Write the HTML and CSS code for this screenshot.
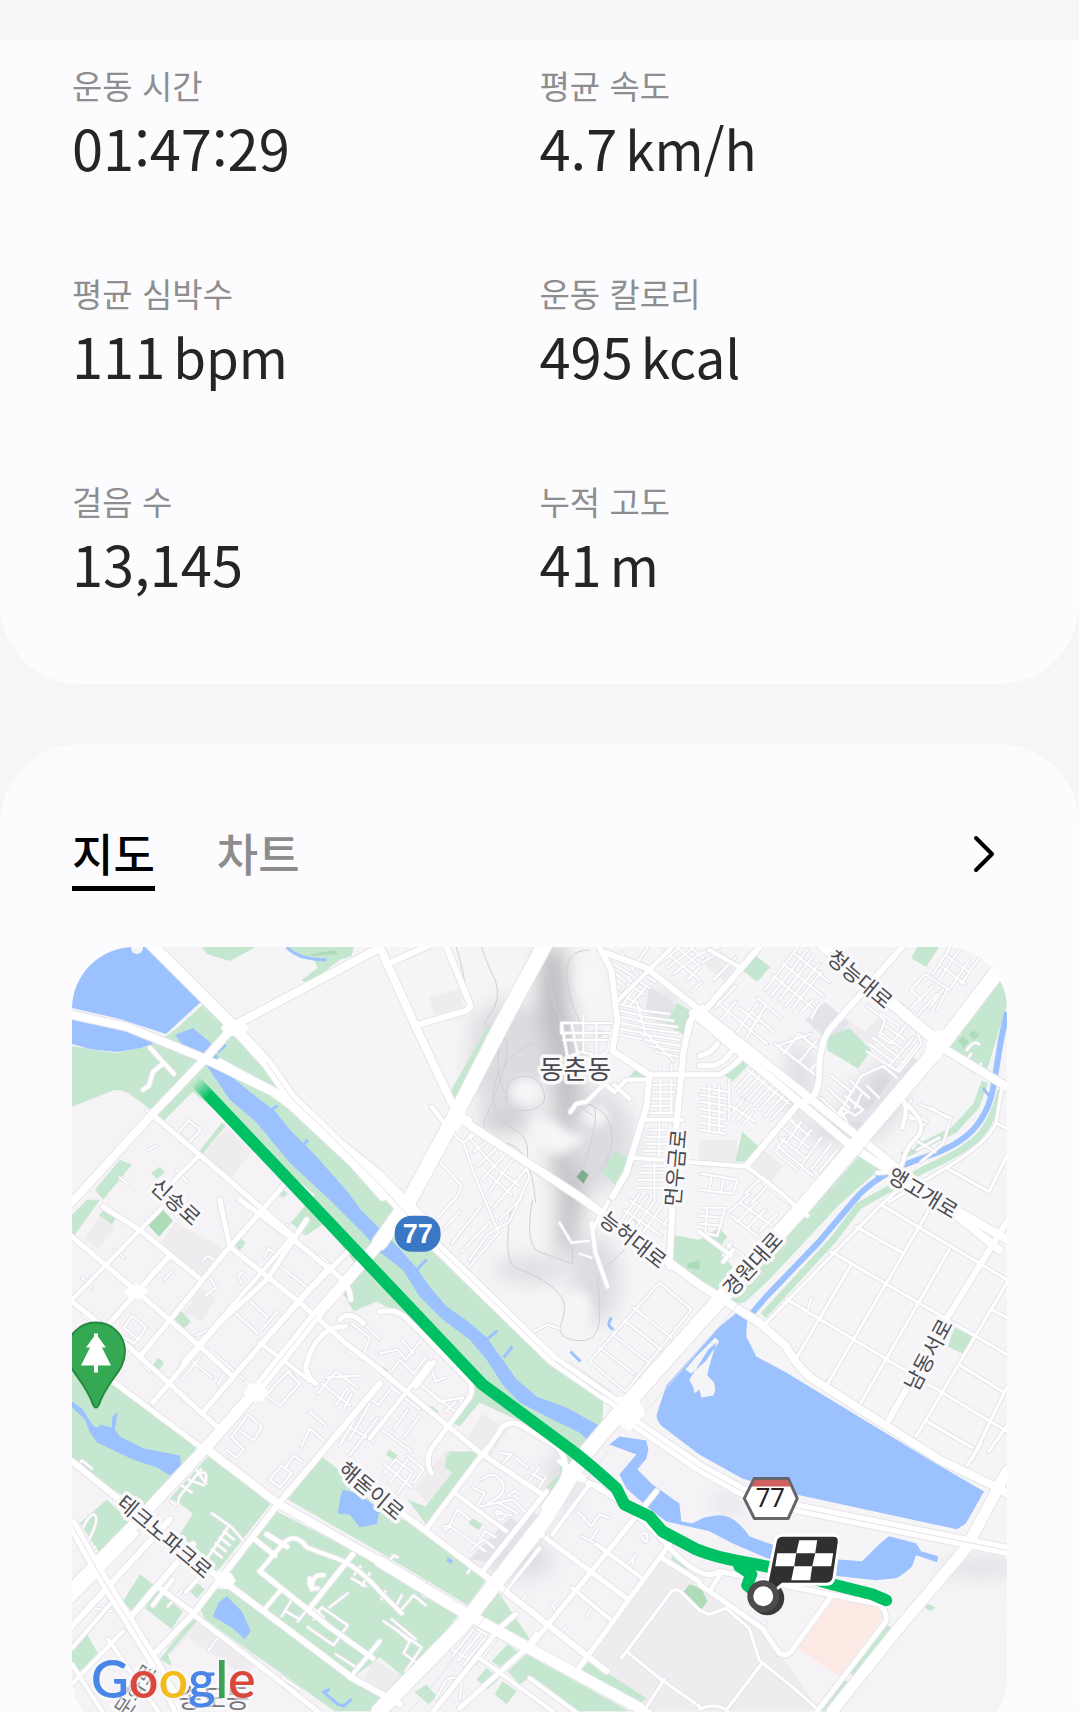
FILE: index.html
```html
<!DOCTYPE html>
<html lang="ko">
  <head>
    <meta charset="UTF-8" />
    <meta name="viewport" content="width=device-width, initial-scale=1.0" />
    <title>운동 기록</title>
    <link rel="stylesheet" href="styles.css">
  </head>
  <body>
    <main class="screen">
      <section class="card summary">
        <dl class="stats">
          <div class="stat"><dt>운동 시간</dt><dd>01:47:29</dd></div>
          <div class="stat"><dt>평균 속도</dt><dd>4.7<span class="unit">km/h</span></dd></div>
          <div class="stat"><dt>평균 심박수</dt><dd>111<span class="unit">bpm</span></dd></div>
          <div class="stat"><dt>운동 칼로리</dt><dd>495<span class="unit">kcal</span></dd></div>
          <div class="stat"><dt>걸음 수</dt><dd>13,145</dd></div>
          <div class="stat"><dt>누적 고도</dt><dd>41<span class="unit">m</span></dd></div>
        </dl>
      </section>

      <section class="card route">
        <div class="route-head">
          <div class="tabs">
            <button type="button" class="tab active">지도</button>
            <button type="button" class="tab">차트</button>
          </div>
          <button type="button" class="more" aria-label="지도 자세히 보기">
            <svg viewBox="0 0 40 40"><path d="M11 4l16 16-16 16"/></svg>
          </button>
        </div>

        <div class="map">
          <svg viewBox="72 947 936 793" role="img" aria-label="운동 경로 지도">
            <defs>
              <filter id="soft" x="-50%" y="-50%" width="200%" height="200%"><feGaussianBlur stdDeviation="10"/></filter>
              <filter id="softer" x="-50%" y="-50%" width="200%" height="200%"><feGaussianBlur stdDeviation="5"/></filter>
              <linearGradient id="fade" gradientUnits="userSpaceOnUse" x1="195" y1="1081" x2="209" y2="1096">
                <stop offset="0" stop-color="#00c064" stop-opacity="0"/>
                <stop offset="1" stop-color="#00c064"/>
              </linearGradient>

              <g id="alleys">
                <!-- fan of blocks under the hill -->
                <path d="M452 1133l12 10 10 30 25 60-30 35M464 1143l12-14 48 30 6 18-20 45-22 13-18 25M474 1152l18-14M478 1166l22-20M482 1180l26-28M488 1194l28-38M494 1208l34-40M500 1220l22-22M484 1130l-14 8 26 30 26 20M490 1175l22 20"/>
                <path d="M438 1160l24 26-4 10-20 22M452 1244l30-38M462 1252l28-30M438 1236l22-24"/>
                <!-- blocks right of the hill -->
                <path d="M562 1023h52v10h-52zM562 1023l6 34 14-5 18 4 8-4 6-28M564 1040h44M572 1023l6 30M584 1016v36M597 1023v33M602 1056l-4 12M586 1057l8 8"/>
                <path d="M619 1004l22 5M618 1010l22 5M617 1016l24 5M617 1022l24 5M617 1028l26 5M616 1034l26 5M618 993l20 10 8 30 14 14 14 14"/>
                <path d="M640 1010l30 4M640 1016l34 5M640 1022l38 5M641 1028l38 5M642 1034l38 6M646 1040l36 6M650 1046l32 6M656 1052l24 5"/>
                <path d="M619 1000l10-14M624 1004l14-20M630 1006l16-18M628 984l16 10M634 978l16 10M640 972l16 10M610 962l24 14M612 970l14 12M608 976l12 12M622 952l12 18M648 948l-14 20"/>
                <path d="M650 1085h26M649 1092h26M648 1099h26M646 1106h26M645 1113h28M661 1068v46M672 1065v50M650 1130h24M648 1137h24M646 1144h24M644 1151h24M660 1122v36M671 1125v32M642 1166h28M640 1173h30M638 1180h30M636 1188h28M655 1160v38"/>
                <path d="M662 962l20-16M668 968l26-20M674 974l26-20M664 950l36 30M676 946l24 20M690 946l14 12M688 980l12-12M692 992l10-10"/>
                <path d="M702 1088l26 4M701 1095l26 4M701 1102l26 4M700 1109l26 4M700 1116l26 4M700 1123l26 4M700 1130l26 4M710 1085v46M720 1086v46M730 1080v40"/>
                <path d="M736 1090l22-24M742 1096l22-24M748 1100l22-24M754 1106l20-22M760 1110l20-22M766 1116l18-20M772 1120l18-20M748 1070l42 34M732 1114l12-14M738 1120l14-16M744 1124l10-12M732 1106l24 16"/>
                <!-- 청능대로 both sides -->
                <path d="M700 954l22-8M704 962l16-10M714 980l22-22M716 1008l20-22M715 1000l36 30 10-14M722 1020l14-18M736 1034l22-30M746 1040l20-34M758 998l24 20M752 1012l22 20M746 1026l22 18M740 1008l18 14"/>
                <path d="M766 990l32-42M772 996l36-46M780 1000l34-44M786 1006l34-42M792 1010l30-38M774 976l40 32M784 964l40 32M796 954l34 28M802 1012l12-12M812 1018l8-14"/>
                <path d="M778 1046l34-12M784 1054l16-20 22 18M776 1044l44 34M800 1062l18-22M812 1070l10-14"/>
                <path d="M868 1006l18 14-6 16 12 8 22-28-12-12M882 1014l18 12M870 1044l24 18M874 1038l26 20M880 1032l22 16M886 1026l20 14M890 1066l24-28M898 1070l20-26M868 1052l32 20 22-28-6-20"/>
                <path d="M918 1016l20-22M912 1008l22-22M922 1000l-10-10 14-16 24 16M930 1008l14-18M938 1010l10-20M940 980l20-30M934 974l18-28M950 990l20-30M962 984l18-26M942 966l24 18M948 956l22 16"/>
                <path d="M846 1104l16-28 22-10 14 12M850 1080l20 18M832 1076l20 16-12 24M828 1088l22 20M822 1098l18 18M818 1106l16 16 8-14M846 1096l18 14-8 6-12-8M862 1094l-6 14M868 1086l12 12M834 1122l14-10M842 1112l8 14"/>
                <!-- below 청능대로 -->
                <path d="M790 1120l20 16M784 1128l26 20M780 1138l26 20M790 1116l8 12M802 1122l-14 20M812 1130l-14 20M822 1138l-20 28M832 1144l-20 26M838 1150l-18 22M778 1146l36 30M786 1138l-10 14 22 18"/>
                <path d="M746 1194l14-14 30 24M752 1204l14-16M702 1174l36 6-4 14-34-4M712 1176l-2 16M724 1178l-2 14M730 1212l20-18M738 1222l20-20M748 1228l18-18M760 1232l18-18M732 1216l28 22M742 1204l34 24"/>
                <path d="M702 1208h24l-8 28-18-4M708 1210l-2 22M700 1216l24 2M700 1224l22 2M728 1244l18 14M724 1256l8-14"/>
                <path d="M672 1212l-8 14M664 1204l-24 34M656 1200l-24 34M648 1196l-24 34M640 1194l-20 30M630 1200l40 28M624 1210l38 26"/>
                <path d="M906 1106l22 16M908 1114l16 10M912 1100l-8 18 18 2M920 1104l32 14-8 26-22 18M932 1108l16 10M918 1150l22-12M916 1140l20 12M926 1124l-12 24"/>
                <!-- warehouse plots -->
                <path d="M660 1283l32 27-66 82-36-30zM634 1308l38 30M624 1320l38 30M612 1334l36 28M600 1348l34 26"/>
                <path d="M532 1333l16-8 12 4M560 1223l12 20 18-2M580 1254l12 4"/>
                <!-- 신송로 side -->
                <path d="M178 1133l11-12 12 9-12 13zM177 1170l10 12M120 1178l8 6M148 1150l8-4M146 1110l8 7M82 1278l10 10M114 1250l10 8M82 1315l8 6M164 1280l8-8M202 1262l6-6 6 4M185 1302l-6-4M206 1296l10-8-6-10M196 1336l12-6M242 1284l-4-8 6-4M265 1257l4-8 8 6M288 1225l-10 8M272 1260l38 30M318 1210l4 12M328 1263l-8-8"/>
                <path d="M124 1328l8-12 14 12-8 12zM142 1334l-8 10-12-8M218 1385l6-10M182 1402l6-8M150 1372l-6-6M248 1358l6-8M282 1322l6-6"/>
                <path d="M234 1312l24 22M246 1298l22 20M260 1332l18-20M268 1338l20-20M200 1358l-18 22M210 1350l34 30M188 1358l24 20"/>
                <path d="M232 1437l16-22 14 12-8 14-14-10M232 1438l12 12-8 8-10-8M266 1396l22-24 12 12-20 22zM286 1374l6-4 6 6M302 1447l8-18 14 12M310 1412l16 14M322 1384l28 22M318 1394l18-22 22 16M336 1406l12-18M344 1410l8-16M326 1378l34-2M340 1446l28-48 12 8M350 1440l20-36M344 1424l30 18M350 1456l28-38"/>
                <path d="M352 1324l18 14-8 22-14-8M366 1326l14 14M380 1354l18-4 8 10 16-20M392 1372l8-12 14 14 12-16M402 1340l12 14M380 1404l12-16 28 22M386 1420l14-18M394 1430l14-20M404 1438l16-22M382 1430l30 22M424 1376l8-6 4 12 10-4M430 1392l28 22 4-14M420 1384l20 18 24-4M446 1412l10-10"/>
                <!-- 해돋이로 side -->
                <path d="M384 1474l12-14 16 12M390 1484l18-24M398 1494l14-20M384 1464l28 24M408 1456l16 14-10 14M498 1453l14 2-10 10-14-4M516 1458l12 10M540 1468l-12 16 10 6 8-12M532 1474l10 6"/>
                <path d="M473 1488l12 6-8 14 36-8 14 14M482 1480q12-10 20 2t-14 22M498 1514l14 2M500 1504l18 10M448 1530l10-20 12 10M446 1532q-4-8 6-4l34 24M470 1552l14-12 10 8M480 1540l6-8 10 6M508 1497l8-6 6 6M502 1513q-8-4-4 4t8-2"/>
                <path d="M452 1658l22-28M458 1662l24-30M464 1666l22-28M472 1664l16-22M452 1650l24 14M478 1630l18 10-16 22M436 1700l10-18q8-8 16 2l-2 16"/>
                <path d="M386 1592l-4 8M402 1596l-6 12M396 1630l14 12-6 12 14 10M384 1622l38 26-16 24M392 1620l24 20M402 1610l12-14 12 10M430 1584l-6 12 14 6M388 1564l6-8 4 2M468 1574l6-10"/>
                <!-- park paths -->
                <path d="M171 1502q8 8 8-4l22-28M188 1480l16 6M196 1470l10 14M198 1475q10-6 8 6M180 1485l12 8M76 1467l6-6 10 8M212 1514l20 14 12 14M228 1528l-20 30M216 1544l10 8M212 1550l10 8M220 1538l10 8M224 1532l10 8M236 1466l8 14M220 1460q4 8 8 0M270 1480l12-14 10 8-12 14zM286 1468l8-12 8 6"/>
                <path d="M83 1528q8-16 12-12t-4 20 4 12M112 1612l-24-4 6-6M168 1607l14-16M208 1652l12-16M352 1579l14 8M355 1575l6-8M362 1586l8-12M282 1617l12-20M286 1612l14 8M298 1622l8-10 12 8M314 1620l8-12 26 18-14 20-26-18M330 1608l18-14M320 1618l10 8M310 1606l14 12M336 1655l22 14 4-6M282 1678l18 12"/>
                <!-- campus side -->
                <path d="M584 1519l8 8 8-12 10 4M578 1513l8 6M582 1537l12 6 8 8M592 1540l6-10M618 1493l-4 4M642 1535q6-4 6 4t-6-2M636 1556l-10 12q8 2 8-8M520 1606l6-10M556 1612l-4-8M588 1616l6-10M560 1636l6-8M762 1628l4-6"/>
                <path d="M808 1312l4-14M968 1050q6-10 12-6M962 1056l12 10M966 1064l6-10M974 1072l8-8"/>
              </g>

              <g id="roads">
                <g class="w3">
                  <path d="M930 1210L828 1385M950 1250L862 1403M1008 1283L917 1437M1008 1387L973 1460M852 1265l-54 92M882 1205l126 75M857 1227l46 26M832 1252l176 103M788 1300l220 132M993 1310l15 8M960 1365l45 28M928 1422l45 26M767 1323l113-116q14-14 30-24"/>
                  <path d="M1003 1088l-6 35q-8 20-50 45t-57 34M997 1123l11 6M947 1168l43 24 18-36"/>
                  <path d="M622 1659l48-64q6-8 12-2l18 18 10 4 17-6 23 20 10 32 37 30 20 18M627 1652l33 27 40 28M762 1665l-35 46M665 1680l-18 28"/>
                  <path d="M700 1710q20-8 30 4M990 1452l18-26M968 1466l14-22"/>
                </g>
                <g class="w5">
                  <path d="M673 947l-58 57M710 950l30 17M592 1223l4 30 12 34M593 1230l16-28M571 1112l6-8 10-2 18-18 10 8 12-12h18M615 1085l15 14"/>
                  <path d="M700 1163l48 4 35 27 17 16M633 1158l67 5M645 1120h38M800 1210l8 6M700 1232l32 24M724 1262l10-12"/>
                  <path d="M903 1128q8-24-2-30M908 1105q22 20 10 32t-14 24-26 12"/>
                  <path d="M452 1133l-20-26M150 1048l24 26M163 1064l-10 8-4 14-6 4"/>
                  <path d="M198 1157l-24 24M163 1207l-91 93M170 1257l-62 68M183 1363l107-123M430 1363l-60 76M260 1343l50 38M260 1572l20-24q14-18 27 0 10 4 30 11t43 33l22 22"/>
                  <path d="M263 1612l17-20M457 1495l50 37M573 1589l40 33M597 1545l46 34M507 1590l33-41M553 1535l34-46q6-8 14-2M480 1659l73 53M530 1679l60 44M310 1579q-2 12 8 10M312 1590q0-16 12-14M350 1679l30-37"/>
                  <path d="M72 1649l38-44M72 1685l51-53M108 1640l50 72M130 1630l60 82M72 1665l30 47M723 1572l-13 20M173 1580l-20 26M200 1577l-14 16"/>
                </g>
                <g class="w6">
                  <path d="M103 1207l39 25 60 49M72 1237l65 55 70 61 26 24M72 1302l60 48 88 80M93 1367l107 80M155 1117l82 70 57 50M240 1200l50 37 53 43q8 10 8 20M220 1200l10 47 70 56 50 44 30 23 100 83M153 1403l67-80 47-43 40-60M203 1413l94-110 33-36M140 1357l90-110 33-37 22-26M110 1323l60-68M233 1377l80-90 40-40"/>
                  <path d="M310 1381l-4-14q10-40 40-40M306 1370q4 10 10 14M340 1320q10-10 24 4M380 1312q18-4 30 10l60 60q4 8 0 16l-36 48q-10 14-2 28M434 1363l-18 24"/>
                  <path d="M500 1432q4-10 18-8l40 24q16 18 0 40l-14 20M483 1455l60 40M500 1432l-16 24"/>
                  <path d="M700 1585l63 44 17 25q8 4 12-2l40-55M560 1462l24 16M663 1559l37 23M580 1479l13 6q38 20 74 60t53 27l80 17 80 16q8 6 7 17l-69 90"/>
                  <path d="M427 1529l60-80M483 1572l64-80M537 1532l90 67M527 1652l130-160M577 1672l93-127M460 1709l67-60 10-14M430 1717l70-88 16-14"/>
                  <path d="M193 1615l87 67 50 40M310 1609l43-54M267 1535l20 12M260 1572l70 56 43 31M255 1540l20 16M160 1589l30 22M700 1075h20q14-8 23-18M650 1075h50M700 1066h12q12-2 20-14M700 1056q12-2 18-12"/>
                  <path d="M470 1120q-10-4-12-12"/>
                </g>
                <g class="w7">
                  <path d="M447 947l23 56q2 6-4 8l-48 14M390 963l40-18M600 947l12 24 6 50-5 30 37 24-3 32-20 66-14 24M690 1023l-6 30-7 74-7 140M703 1008q-12 6-14 24M760 947l-60 70M1008 1222l-61 98-57 100"/>
                  <path d="M903 947l-73 83q-10 14-10 43t-20 30l-52 62M607 953l40 15 53 42"/>
                  <path d="M497 1585l110 87M400 1512l97 73M72 1600l64-66M60 1640l110-120M133 1615l60-70M157 1652l36-37 28-36 57-74 45-53 57-68"/>
                  <path d="M72 1462l71 57 77 60 133 100 47 26"/>
                </g>
                <g class="w9">
                  <path d="M380 948l-145 77-28 32-57 60-73 80-20 20M380 947l33 73 39 83M700 1010l300 240M694 1013l159 134 47 30 108 63M462 1120l118 77 120 88 60 38 27 24q8 16 23 30l130 83 60 29 20 13"/>
                  <path d="M947 1050l61 37M72 1015l55 12 76 31 70 34 47 35 60 48 50 50M220 1063l60 32 73 68 30 34M210 1452l68 52 102 58 87 53 173 94 40 24"/>
                </g>
                <g class="w12">
                  <path d="M147 940l88 88 32 35 26 37 27 25 60 60 57 62 116 113 70 48M823 945l110 92M72 1525l28 50 60 97 18 40M630 1420l70 48 43 24 57 17 208 42"/>
                  <path d="M1008 1472l-41 77-70 83-64 80M380 1243l-63 72-60 75-50 57-67 72-68 70M380 1562l87 53 173 94"/>
                </g>
                <g class="w16">
                  <path d="M545 945l-42 78-48 94-45 83-30 43M1002 967l-55 72-47 55-50 59-40 47-110 123-73 82-42 50-40 66-82 105-84 86"/>
                </g>
              </g>
            </defs>

            <rect class="land" x="72" y="947" width="936" height="793"/>
            <path class="upper-land" d="M230 947H1008V1632H897L700 1470 600 1410 437 1247 293 1100Z"/>

            <g class="hill" filter="url(#soft)">
              <path class="dark" d="M540 947h24l6 60 8 50 6 60-6 40 6 40-12 60-14-6 2-60-8-50 4-60-18-60z"/>
              <ellipse class="dark" cx="506" cy="1121" rx="24" ry="10"/>
              <ellipse class="dark" cx="576" cy="1166" rx="24" ry="26"/>
              <ellipse class="mid" cx="502" cy="1022" rx="36" ry="8"/>
              <ellipse class="mid" cx="510" cy="1060" rx="40" ry="60"/>
              <ellipse class="mid" cx="600" cy="1140" rx="34" ry="50"/>
              <ellipse class="mid" cx="530" cy="1270" rx="36" ry="12"/>
              <ellipse class="mid" cx="596" cy="1280" rx="24" ry="44"/>
              <ellipse class="dark" cx="883" cy="1086" rx="14" ry="16"/>
              <ellipse class="mid" cx="875" cy="1104" rx="30" ry="22"/>
              <ellipse class="mid" cx="845" cy="1130" rx="40" ry="14"/>
              <ellipse class="mid" cx="562" cy="1480" rx="14" ry="28"/>
              <ellipse class="mid" cx="520" cy="1560" rx="34" ry="18"/>
              <ellipse class="mid" cx="728" cy="1504" rx="16" ry="7"/>
              <ellipse class="mid" cx="980" cy="1568" rx="40" ry="8"/>
              <ellipse class="mid" cx="666" cy="1000" rx="14" ry="10"/>
              <ellipse class="mid" cx="800" cy="1080" rx="12" ry="40"/>
            </g>
            <g class="glow" filter="url(#softer)">
              <ellipse cx="527" cy="1092" rx="16" ry="14"/>
              <path d="M530 1124q20-10 32 2t24 8q-6 16-26 20t-30-30z"/>
              <ellipse cx="596" cy="1116" rx="14" ry="10"/>
              <ellipse cx="592" cy="980" rx="14" ry="24"/>
              <ellipse cx="578" cy="1310" rx="14" ry="20"/>
            </g>
            <path class="contour" d="M482 947q4 14 14 34 6 20-6 34t8 12q14 14 8 36t-18 50 16 30 32 60M545 947q2 40 14 66 6 30 10 50M590 950q-26 0-22 30t12 40q6 30-4 46-4 40 18 50M548 1052q-8-16-24-4-30 20-30 46t18 34 16 26 16 24 30 0 20-46-14-20-20-22 4-40M520 1077q18-4 24 14t-20 20-14-30zM573 1102q30 0 38 24t-14 50M533 1200q-8 44 6 52l34 12q2-20-10-60M512 1205q-10 60 6 64 30 10 44 28 6 10 0 26t16 18 22-24-2-34 24-30 8-40M456 945q10 30 12 60M500 1040q-6 40 10 60"/>

            <g class="block">
              <path d="M228 1128l24 24-22 28-30-23zM175 1222l52 28-27 32-40-37zM100 1215l15 14-17 20-14-10zM200 1288l16 12-14 22-18-8zM663 1559l105 71 14 25 36 54-8 3H640l-50-60zM483 1414l26 16-20 30-22-20zM414 1490l32-40 18 18-34 38zM353 1615l27 20-17 17-23-18zM200 1618l60 40-14 20-58-40-18 18-4-8zM372 1660l30 16-20 30-20-18zM430 997l30-8 4 18-30 8zM700 1140h38v28h-38zM764 1150l20 16-14 18-20-16zM720 950l22 18-14 16-26-22zM846 1018l20 14 14-16 8 12-14 18-32-14z"/>
              <path class="cool" d="M650 986l28 20-12 22-20-16zM806 1020l20-18 24 20-18 22zM870 1110l40-56 10 8-48 62-36-4zM505 1545l28-34 12 10-36 44zM470 1560l26 4 24-40-10-6z"/>
            </g>

            <g class="green">
              <path d="M72 1046l45 7 40-11 18-12 30-27 22 22 8 10 33 30 22 32 90 95 40 44 120 111 64 48-1 33-16 22-34-10-20-13-23-10-30-14-20 24-8-4 18-30-3-14-68-65-22-12-23 10-15-26 15-24-29-39-19 13-15-13 24-28L193 1092 163 1122 155 1113 128 1093Q118 1088 110 1092L72 1107z"/>
              <path d="M202 947h54l-26 14-23-7zM287 947h67l-2 9-12 4-32 24-6-4 16-12-4-8-14-2zM95 1190l25-30 12 5-29 35zM72 1215l15-15h13l-25 35-3 3zM108 1207l9 10-5 8-13-10zM160 1167l5 6-8 6-6-6zM240 1238l6 5-6 8-5-6zM182 1312l9 10-7 7-12-12zM158 1358l6 5-4 7-8-2zM284 1190l4 4-5 4-4-4z"/>
              <path d="M222 1123l4 3-24 29-3-3z"/>
              <path d="M72 1367l41 13 84 65-7 17-43 48-17-10-58-34zM107 1500l33 32-37 27-23-35zM210 1455h10l52 48-52 66-8 5-32-39 13-21-16-12-7-3zM322 1457l-34 43 92 53 88 53 19-26-57-48-50-22-35-35zM448 1452h24l13 5-58 69-19-26 18 7 32-41zM277 1512l103 53 80 49-67 86-5-10 14-14-22-18-25 19-128-89-5-13zM200 1608l17-18h11l122 88 35 22v12h-50l-130-92zM140 1575l13 10-21 27-9-10zM157 1590l26 22-11 18-27-21zM198 1584l7 6-8 9-7-7zM87 1635l11 19-18 18-8-5v-17zM193 1618l4 4-29 33 4 12-12-7zM390 1450l8 6-4 5-8-6zM384 1367l5 4-4 4-5-4zM432 1406l7 6-4 4-6-5zM447 1454l16 10-6 12-12-8z"/>
              <path d="M498 1592l34 50-5 2-50-27zM590 1662l57 37-10 8-59-33zM527 1655l103 57h-50l-47-35-13 8-12-13zM508 1645l10 7-15 18-11-8zM487 1669l13 10-12 11-11-10zM427 1685l10 12-8 8-14-12zM503 1682l14 10-10 13-12-10zM562 1452l28 13-43 38-6-10 19-18zM473 1519l10 6-4 6-10-7zM673 1554l19 12-5 5-15-11z"/>
              <path d="M487 1028l7 5-39 65-6-3zM594 1030h8v7h-8zM678 1003l17 10-10 22-19-10zM638 1067l10 6v7h-20zM615 1152l14 5-2 16-9 14-15-14 4-8zM753 953l18 14-13 15-15-12zM918 947h22l-13 20-15-9zM828 1037l22-9 22 22-13 19-31-19zM743 1053l9 9-19 20-10-9zM743 1132l18 16-13 14h-12zM997 977l9 10 2 18-20 65-38-22-2-8zM860 1157l22 11-42 37-70 75-25 23-12 2-3-8 92-102zM673 1235l27 5 20-12 8 9-8 11 13 19-10 26-23-13-32-21zM955 1328l19 9-9 18-16-8zM887 1624l8 8-35 47-10-5zM843 1679l10 6-25 27h-10zM928 1604l8 4-4 4-6-3z"/>
              <path class="bank" d="M986 1082l-9 24-22 24-52 26M1002 1090q-10 38-28 52t-50 28l-64 36-26 34-70 76"/>
            </g>
            <g class="deep-green">
              <path d="M163 1210l10 11-14 16-11-12zM310 954l26-4 2 4-26 2zM964 1036l6 6-5 6-6-7zM974 1030l6 5-5 5-5-5zM690 1585l12 4 6 13-6 8-20-14zM688 1264l12-4v10l-12-2z"/>
              <path class="grove" d="M583 1170l6 5-5 9-7-7z"/>
            </g>
            <path class="pink" d="M837 1597l40 8q8 4 8 12l-45 60-42-28z"/>

            <g class="water">
              <path d="M72 947h76l54 54-36 33-46-15-48-11zM72 1019l48 9 38 14-18 6-23 4-27-3-18-5z"/>
              <path d="M185 1031l8-3 17 14 10 18 8 14 22 18 26 20 14 18 25 25 32 36 15 20 36 36 19 21 13 19 17 20 23 16 17 15 16 22 14 20 20 17 30 11 36 20-10 17-13-12-27-13-33-17-17-18-16-25-17-20-27-20-23-23-17-27-26-20-10-13-34-34-43-40-33-40-27-23-23-34-20-16-12-15z"/>
              <path d="M300 1150l8-10M268 1112l10-6M417 1270l10-10M487 1340l11-9M504 1358l9-11M218 1052l8-7M584 1450l6-10" class="brook"/>
              <path d="M610 1445l10-8 27 4 2 9-2 9-9 11 15 15 27 19 2 18 11 2 12-6 12-2q18-2 33 21l22 8 50 14 41 3 17-17 10-8 27 7 5 8 17 5-1 6-21-7-4 11q-8 8-16 12l-20 2-37-4-72-18-35-15-23-12-43-10-17-13-23-20-7-14 17-20z"/>
              <path d="M748 1317l-1 20 10 20 30 16 143 87 55 32-18 32-9 6-161-35-54-16-43-24-37-28q-8-8-5-14l9-27 33-37 18-20 22-18z"/>
              <path d="M72 1402l11 8 9 15q6 6 8 0l12 3v-10l6-6-3 18 5 7 24 12 36 7 1 10-11 10-13-8-30-10 6 2-36-17-7-10-5-13-13-12zM227 1597l15 15 9 20-6 8-12-11-20-12 6-14zM343 1490l17 5 20 15-3 15-17 3-10-13-12-1 3-18zM448 1558l5 3-1 4-5-3z"/>
              <path class="brook" d="M330 1690l-6 3 14 12 6 2 8-7M571 1352l10 10M612 1318q-6 8 2 12M287 947q10 12 40 13"/>
              <path class="river" d="M1008 1012l-6 28-7 43q-4 28-20 46t-54 30q-40 14-62 37l-39 46-53 55-19 22"/>
              <path class="brook" d="M984 1088l6 8M876 1172l4 8"/>
            </g>
            <path class="spit" d="M717 1343l-8 7-10 16-9 14 4 8 1 6 5-4 2 8 12-2q4-6 0-14l-6-6 1-6zM696 1358l20-20 4 4-14 20-14 12-6-4z"/>
            <circle class="spit" cx="137" cy="948" r="6"/>

            <use href="#alleys" class="casing alley"/>
            <use href="#alleys" class="fill alley"/>
            <use href="#roads" class="casing"/>
            <use href="#roads" class="fill"/>
            <path class="lane" d="M72 1525l28 50 60 97 18 40M630 1420l70 48 43 24 57 17 208 42M317 1315l-60 75M267 1063l26 37 27 25 60 60 57 62 116 113 70 48M610 1450l-80 108-90 120-30 34M640 1420l120-140 120-150M556 1362l48 34M570 1362l42 30"/>
            <path class="junction" d="M227 1020h16l6 8-6 8h-16l-6-8zM130 1285h12l6 6-6 8h-12l-6-6zM250 1384h12l6 8-6 10h-12l-6-8zM930 1032l18-2 4 14-12 16-14-8zM618 1398l18-4 10 20-16 18-12-8zM452 1106l14 10-8 16-14-6zM218 1572l14 2 4 8-8 8-14-6z"/>

            <g class="route-line">
              <path class="start" d="M198 1084L483 1385l92 68q20 16 42 36l8 16 25 12 13 15 34 18q20 8 44 12l36 7 56 16 40 10 14 6"/>
              <path d="M740 1567l12 8-4 11 10 8"/>
            </g>

            <g class="labels">
              <text class="town" transform="translate(576 1079)">동춘동</text>
              <text transform="translate(861 979) rotate(40)" y="8">청능대로</text>
              <text transform="translate(924 1193) rotate(31)" y="8">앵고개로</text>
              <text transform="translate(176 1202) rotate(42)" y="8">신송로</text>
              <text transform="translate(634 1240) rotate(38)" y="8">능허대로</text>
              <text transform="translate(753 1264) rotate(-48)" y="8">경원대로</text>
              <text transform="translate(929 1355) rotate(-62)" y="8">남동서로</text>
              <text transform="translate(676 1168) rotate(-85)" y="8">먼우금로</text>
              <text transform="translate(372 1491) rotate(40)" y="8">해돋이로</text>
              <text transform="translate(165 1537) rotate(40)" y="8">테크노파크로</text>
              <text class="faint" transform="translate(135 1691) rotate(-57)" y="8">문화로</text>
              <text class="town faint" transform="translate(214 1709)">송도동</text>
            </g>

            <g class="shield">
              <rect x="395" y="1216" width="46" height="36" rx="17"/>
              <text x="418" y="1243">77</text>
            </g>
            <g class="hex">
              <path class="hex-body" d="M745 1499l10-20h34l9 20-9 20h-34z"/>
              <path class="hex-top" d="M752 1487l4-7h32l3 7z"/>
              <path class="hex-edge" d="M745 1499l10-20h34l9 20-9 20h-34z"/>
              <text x="771" y="1508">77</text>
            </g>

            <g class="pin">
              <path d="M96 1323c17 0 29 13 29 29 0 20-17 27-26 53q-3 6-6 0c-9-26-26-33-26-53 0-16 12-29 29-29z"/>
              <path class="tree" d="M94 1334h4v3l8 11h-4l9 18H98v7h-4v-7H81l9-18h-4l8-11z"/>
            </g>

            <g class="finish">
              <circle class="shade" cx="768" cy="1599" r="17"/>
              <path class="flag" d="M784 1536h50q7 0 6 7l-5 35q-1 7-8 7h-44l-14 12-3-5 10-50q1-6 8-6z"/>
              <path class="checks" d="M800 1541h18l-2 13h-19zM778 1554h19l-2 13h-19zM816 1554h18l-2 13h-19zM795 1567h18l-2 14h-19z"/>
              <circle class="dot" cx="764" cy="1597" r="13"/>
            </g>

            <text class="google" x="91" y="1699"><tspan class="blue">G</tspan><tspan class="red">o</tspan><tspan class="yellow">o</tspan><tspan class="blue">g</tspan><tspan class="leaf">l</tspan><tspan class="red">e</tspan></text>
          </svg>
        </div>
      </section>
    </main>
  </body>
</html>
```
FILE: styles.css
```css
* {
  box-sizing: border-box;
}

html,
body {
  margin: 0;
  font-family: "Noto Sans CJK KR", "Noto Sans", sans-serif;
}

.screen {
  height: 100vh;
  overflow: hidden;
  padding-top: 40px;
  background-color: #f6f6f8;
}

.card {
  background-color: #fcfcfe;
  border-radius: 80px;
  padding: 0 72px;
}

.summary {
  border-top-left-radius: 0;
  border-top-right-radius: 0;
  padding-top: 22px;
  padding-bottom: 83px;
  margin-bottom: 60px;
}

.stats {
  display: grid;
  grid-template-columns: 1fr 1fr;
  row-gap: 85px;
  margin: 0;
}

.stat dt {
  font-size: 33px;
  line-height: 47px;
  color: #8e8e90;
}

.stat dd {
  margin: 0;
  font-size: 56px;
  line-height: 76px;
  color: #252528;
}

.unit {
  margin-left: 8px;
  font-size: 53px;
  line-height: 1;
}

.route {
  padding-top: 81px;
  padding-bottom: 40px;
}

.route-head {
  display: flex;
  justify-content: space-between;
  align-items: flex-start;
  margin-bottom: 56px;
}

.tabs {
  display: flex;
  gap: 62px;
}

.tab {
  padding: 0 0 5px;
  border: 0;
  border-bottom: 5px solid transparent;
  background: none;
  font-family: inherit;
  font-size: 45px;
  font-weight: 500;
  line-height: 56px;
  color: #8c8c8c;
}

.tab.active {
  color: #000;
  border-bottom-color: #000;
}

.more {
  margin: 9px 0 0;
  padding: 0 2px 0 0;
  border: 0;
  background: none;
}

.more svg {
  display: block;
  width: 40px;
  height: 40px;
  fill: none;
  stroke: #000;
  stroke-width: 4;
  stroke-linecap: round;
  stroke-linejoin: round;
}

/* map */
.map {
  border-radius: 62px;
  overflow: hidden;
}

.map svg {
  display: block;
  width: 100%;
  height: auto;
}

.land { fill: #f6f3f7; }
.upper-land { fill: #f5f4f6; }
.block { fill: #efecf0; }
.block .cool { fill: #e3e4e9; }
.green { fill: #c5e7cf; }
.deep-green { fill: #aedcb9; }
.deep-green .grove { fill: #7fae8f; }
.pink { fill: #fde9e4; }
.spit { fill: #f5f4f6; }

.bank {
  fill: none;
  stroke: #c5e7cf;
  stroke-width: 7;
}

.hill .dark { fill: #bdbcc0; }
.hill .mid { fill: #dcdbe0; }
.glow { fill: #f6f5f7; }

.contour {
  fill: none;
  stroke: #cfced2;
}

.water { fill: #9cc1ff; }

.brook,
.river {
  fill: none;
  stroke: #9cc1ff;
  stroke-width: 3;
}

.river { stroke-width: 6; }

.casing,
.fill {
  fill: none;
  stroke: #fff;
  stroke-linecap: round;
  stroke-linejoin: round;
  --edge: 0px;
}

.casing {
  stroke: #e5e4ea;
  --edge: 2px;
}

.alley { stroke-width: 2; }
.casing.alley { stroke-width: 4; }
.w3 { stroke-width: calc(3px + var(--edge)); }
.w5 { stroke-width: calc(4px + var(--edge)); }
.w6 { stroke-width: calc(5px + var(--edge)); }
.w7 { stroke-width: calc(6px + var(--edge)); }
.w9 { stroke-width: calc(8px + var(--edge)); }
.w12 { stroke-width: calc(11px + var(--edge)); }
.w16 { stroke-width: calc(15px + var(--edge)); }

.lane {
  fill: none;
  stroke: #e3e2e7;
}

.junction { fill: #fff; }

.route-line {
  fill: none;
  stroke: #00c064;
  stroke-width: 12;
  stroke-linejoin: round;
  stroke-linecap: round;
}

.route-line .start { stroke: url(#fade); }

.labels text {
  font-size: 21px;
  text-anchor: middle;
  fill: #4a4a4e;
  stroke: #f9f8fa;
  stroke-width: 7;
  stroke-linejoin: round;
  paint-order: stroke;
}

.labels .town { font-size: 26px; }
.labels .faint { fill: #77777b; }

.shield rect { fill: #3a78c6; }

.shield text {
  font: bold 27px "Liberation Sans", sans-serif;
  text-anchor: middle;
  fill: #fff;
}

.hex-body { fill: #fff; }
.hex-top { fill: #d0605e; }

.hex-edge {
  fill: none;
  stroke: #66666a;
  stroke-width: 3;
  stroke-linejoin: round;
}

.hex text {
  font: 26px Roboto, sans-serif;
  text-anchor: middle;
  fill: #222;
}

.pin path {
  fill: #34a853;
  stroke: #26893f;
  stroke-width: 2;
}

.pin .tree {
  fill: #fff;
  stroke: none;
}

.finish .shade { fill: #3a3a3a; }

.finish .flag {
  fill: #303030;
  stroke: #fff;
  stroke-width: 3;
  stroke-linejoin: round;
}

.finish .checks { fill: #fff; }

.finish .dot {
  fill: #fff;
  stroke: #4c4c4c;
  stroke-width: 6;
}

.google {
  font: 600 52px Lato, sans-serif;
  stroke: #f9f8fa;
  stroke-width: 5;
  stroke-opacity: 0.6;
  paint-order: stroke;
}

.blue { fill: #4a86e8; }
.red { fill: #d9483b; }
.yellow { fill: #f3bb1c; }
.leaf { fill: #3ba357; }
```
